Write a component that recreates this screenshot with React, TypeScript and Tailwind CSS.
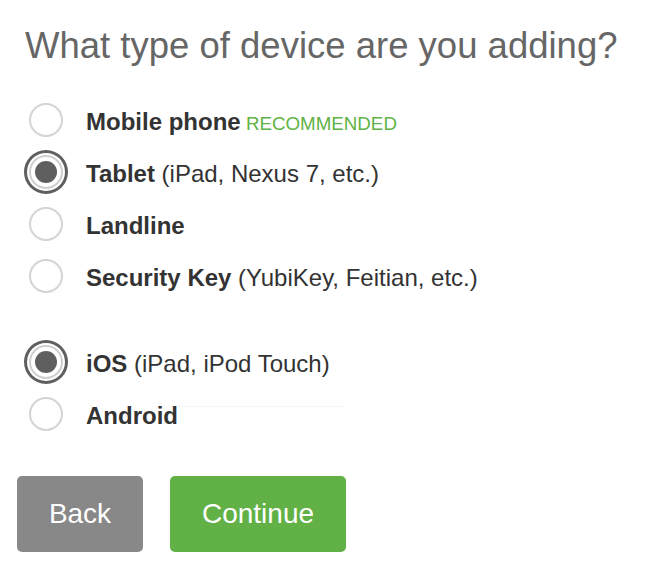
import React from 'react';

type Option = { id: string; label: string; hint?: string; tag?: string };

const deviceTypes: Option[] = [
  { id: 'mobile', label: 'Mobile phone', tag: 'RECOMMENDED' },
  { id: 'tablet', label: 'Tablet', hint: '(iPad, Nexus 7, etc.)' },
  { id: 'landline', label: 'Landline' },
  { id: 'token', label: 'Security Key', hint: '(YubiKey, Feitian, etc.)' },
];

const platforms: Option[] = [
  { id: 'ios', label: 'iOS', hint: '(iPad, iPod Touch)' },
  { id: 'android', label: 'Android' },
];

const Radio = ({ checked }: { checked: boolean }) => (
  <span
    className={
      checked
        ? 'flex items-center justify-center w-[34px] h-[34px] rounded-full border-2 border-[#cfcfcf] bg-white shadow-[0_0_0_2px_#fff,0_0_0_5px_#5f5f5f] shrink-0'
        : 'flex items-center justify-center w-[34px] h-[34px] rounded-full border-2 border-[#d4d4d4] bg-white shrink-0'
    }
  >
    {checked && <span className="w-[22px] h-[22px] rounded-full bg-[#5f5f5f]" />}
  </span>
);

const Row = ({
  opt,
  selected,
  onPick,
  divider,
}: {
  opt: Option;
  selected: string;
  onPick: (id: string) => void;
  divider?: boolean;
}) => (
  <label
    onClick={() => onPick(opt.id)}
    className="relative flex items-center h-[52px] pl-[29px] gap-[23px] cursor-pointer"
  >
    {divider && <span className="absolute left-[178px] top-[18px] w-[168px] h-px bg-[#f6f6f6]" />}
    <Radio checked={selected === opt.id} />
    <span className="relative mt-[3px] text-[24px] leading-none text-[#333]">
      <span className="font-bold">{opt.label}</span>
      {opt.hint && <span> {opt.hint}</span>}
      {opt.tag && <span className="text-[18.75px] text-[#5fb346]"> {opt.tag}</span>}
    </span>
  </label>
);

export default function App() {
  const [device, setDevice] = React.useState('tablet');
  const [platform, setPlatform] = React.useState('ios');

  return (
    <div className="w-[668px] h-[568px] bg-white overflow-hidden font-['Liberation_Sans',Arial,sans-serif]">
      <h1 className="pl-[25px] pt-[26px] text-[36.5px] leading-[40px] text-[#666] font-normal">
        What type of device are you adding?
      </h1>

      <div className="mt-[28px] flex flex-col">
        {deviceTypes.map((o) => (
          <Row key={o.id} opt={o} selected={device} onPick={setDevice} />
        ))}
      </div>

      <div className="mt-[34px] flex flex-col">
        {platforms.map((o) => (
          <Row
            key={o.id}
            opt={o}
            selected={platform}
            onPick={setPlatform}
            divider={o.id === 'android'}
          />
        ))}
      </div>

      <div className="mt-[36px] pl-[17px] flex gap-[27px]">
        <button className="w-[126px] h-[76px] rounded-[5px] bg-[#888] text-white text-[28px]">
          Back
        </button>
        <button className="w-[176px] h-[76px] rounded-[5px] bg-[#62b146] text-white text-[28px]">
          Continue
        </button>
      </div>
    </div>
  );
}
